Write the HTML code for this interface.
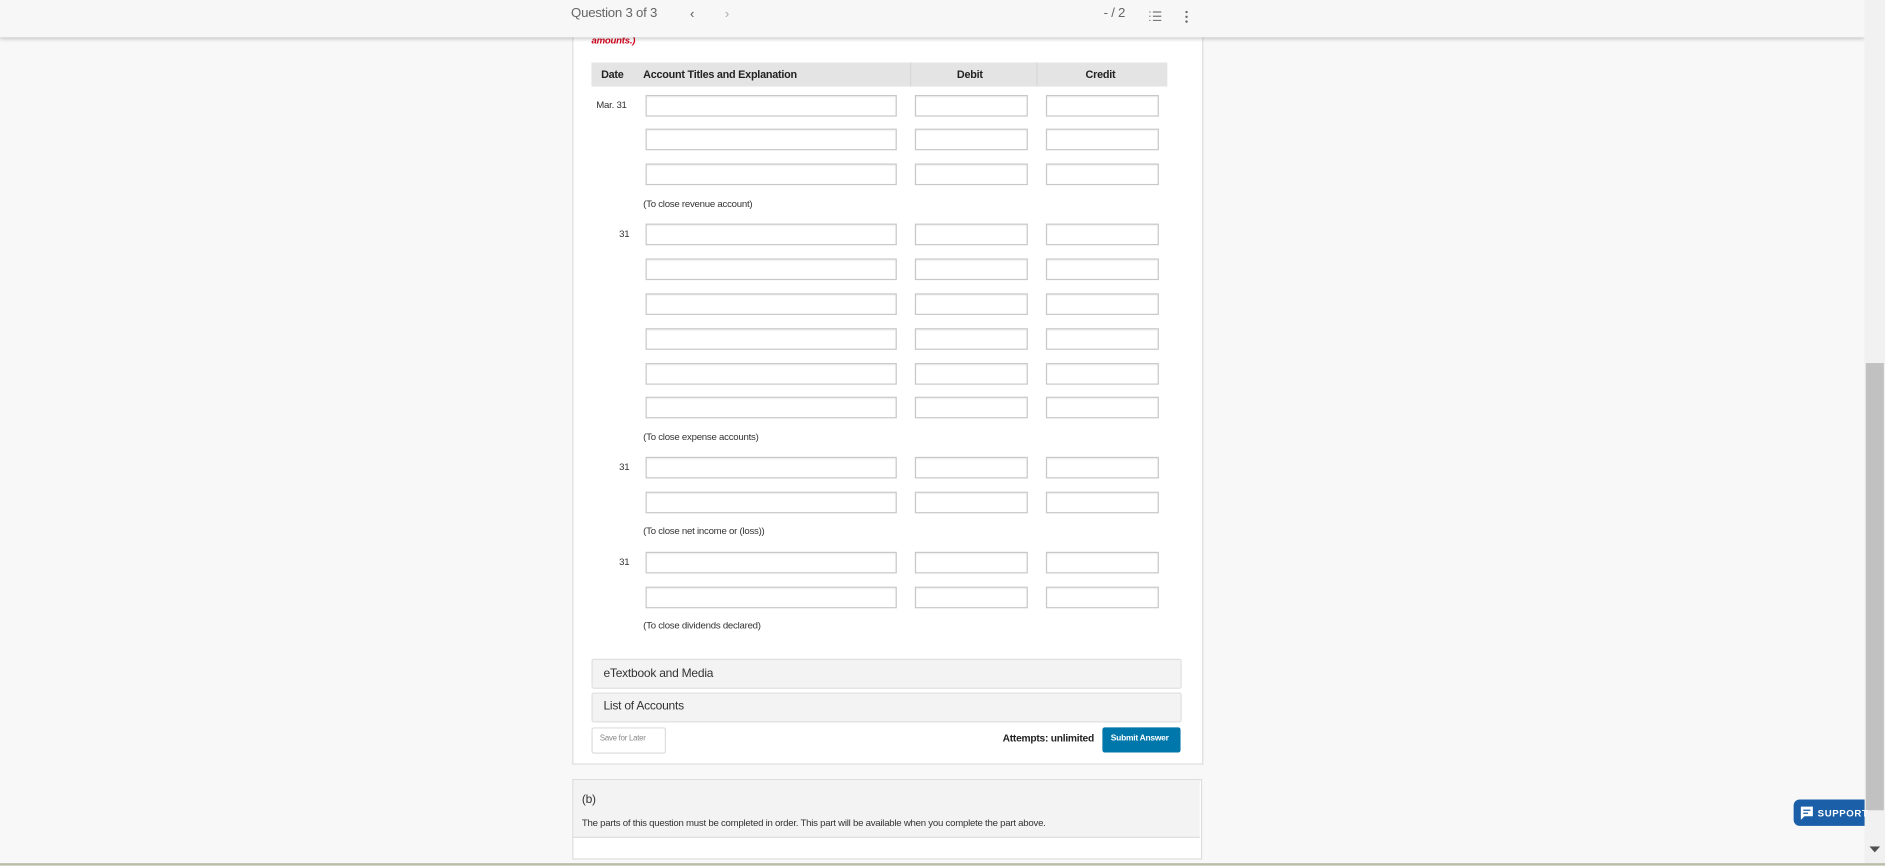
<!DOCTYPE html>
<html><head><meta charset="utf-8"><style>
html,body{margin:0;padding:0;width:1885px;height:866px;overflow:hidden;background:#f8f8f8;font-family:"Liberation Sans",sans-serif;}
#c{position:absolute;left:0;top:0;width:1568px;height:720px;transform:scale(1.20217);transform-origin:0 0;background:#f8f8f8;}
.a{position:absolute;}
.in{position:absolute;height:16px;border:1px solid #c8c8c8;background:#fff;box-sizing:content-box;box-shadow:inset 0 1px 1px rgba(0,0,0,.06);}
.t{position:absolute;font-size:8px;color:#333;white-space:nowrap;letter-spacing:-0.2px;}
</style></head><body><div id="c">
<div class="a" style="left:476px;top:20px;width:523px;height:615px;background:#fff;border:1px solid #ddd;border-top:none;"></div>
<div class="a t" style="left:492px;top:29px;color:#d0021b;font-style:italic;font-weight:bold;font-size:8px;">amounts.)</div>
<div class="a" style="left:492px;top:52px;width:479px;height:20px;background:#e4e4e4;"></div>
<div class="a" style="left:757px;top:52px;width:1px;height:20px;background:#d8d8d8;"></div>
<div class="a" style="left:862px;top:52px;width:1px;height:20px;background:#d8d8d8;"></div>
<div class="t" style="left:500px;top:57px;font-weight:bold;font-size:9px;color:#222;">Date</div>
<div class="t" style="left:535px;top:57px;font-weight:bold;font-size:9px;color:#222;">Account Titles and Explanation</div>
<div class="t" style="left:796px;top:57px;font-weight:bold;font-size:9px;color:#222;">Debit</div>
<div class="t" style="left:903px;top:57px;font-weight:bold;font-size:9px;color:#222;">Credit</div>
<div class="t" style="left:496px;top:83px;">Mar. 31</div>
<div class="t" style="left:515px;top:190px;">31</div>
<div class="t" style="left:515px;top:384px;">31</div>
<div class="t" style="left:515px;top:463px;">31</div>
<div class="t" style="left:535px;top:165px;">(To close revenue account)</div>
<div class="t" style="left:535px;top:359px;">(To close expense accounts)</div>
<div class="t" style="left:535px;top:437px;">(To close net income or (loss))</div>
<div class="t" style="left:535px;top:516px;">(To close dividends declared)</div>
<div id="rows"></div>
<script>
var ys=[79,107,136,186,215,244,273,302,330,380,409,459,488],h='';
ys.forEach(function(y){h+='<div class="in" style="left:537px;top:'+y+'px;width:207px"></div><div class="in" style="left:761px;top:'+y+'px;width:92px"></div><div class="in" style="left:870px;top:'+y+'px;width:92px"></div>';});
document.getElementById('rows').innerHTML=h;
</script>
<div class="a" style="left:492px;top:548px;width:489px;height:23px;background:#f3f3f3;border:1px solid #e0e0e0;border-radius:2px;"></div>
<div class="t" style="left:502px;top:555px;font-size:10px;">eTextbook and Media</div>
<div class="a" style="left:492px;top:576px;width:489px;height:23px;background:#f3f3f3;border:1px solid #e0e0e0;border-radius:2px;"></div>
<div class="t" style="left:502px;top:582px;font-size:10px;">List of Accounts</div>
<div class="a" style="left:492px;top:605px;width:60px;height:20px;background:#fff;border:1px solid #ddd;border-radius:2px;"></div>
<div class="t" style="left:499px;top:611px;font-size:6.5px;color:#888;">Save for Later</div>
<div class="t" style="left:834px;top:609px;font-size:8.5px;color:#222;font-weight:bold;">Attempts: unlimited</div>
<div class="a" style="left:917px;top:605px;width:65px;height:21px;background:#0077aa;border-radius:2px;"></div>
<div class="t" style="left:924px;top:611px;font-size:7px;color:#fff;font-weight:bold;">Submit Answer</div>
<div class="a" style="left:476px;top:648px;width:522px;height:65px;background:#fff;border:1px solid #ddd;"></div>
<div class="a" style="left:477px;top:649px;width:521px;height:47px;background:#f3f3f3;border-bottom:1px solid #ddd;"></div>
<div class="t" style="left:484px;top:660px;font-size:10px;">(b)</div>
<div class="t" style="left:484px;top:680px;font-size:8px;">The parts of this question must be completed in order. This part will be available when you complete the part above.</div>
<div class="a" style="left:0;top:0;width:1551px;height:31px;background:#f7f7f7;box-shadow:0 2px 3px rgba(0,0,0,.18);"></div>
<div class="t" style="left:475px;top:5px;font-size:11px;color:#666;">Question 3 of 3</div>
<div class="t" style="left:574px;top:6px;font-size:11px;color:#555;">&#8249;</div>
<div class="t" style="left:603px;top:6px;font-size:11px;color:#aaa;">&#8250;</div>
<div class="t" style="left:918px;top:5px;font-size:11px;color:#666;">- / 2</div>
<svg class="a" style="left:955px;top:8px" width="12" height="12"><g stroke="#777" stroke-width="1"><path d="M1 2h1M1 5.5h1M1 9h1M4 2h7M4 5.5h7M4 9h7"/></g></svg>
<svg class="a" style="left:985px;top:8px" width="4" height="12"><g fill="#666"><circle cx="2" cy="2" r="1"/><circle cx="2" cy="6" r="1"/><circle cx="2" cy="10" r="1"/></g></svg>
<div class="a" style="left:1551px;top:0;width:17px;height:720px;background:#f1f1f1;"></div>
<div class="a" style="left:1552px;top:302px;width:15px;height:372px;background:#c1c1c1;"></div>
<svg class="a" style="left:1555px;top:704px" width="9" height="6"><path d="M0 0h9L4.5 5z" fill="#505050"/></svg>
<div class="a" style="left:0;top:718px;width:1568px;height:2px;background:#b9bda8;"></div>
<div class="a" style="left:1492px;top:665px;width:59px;height:22px;background:#1a5fa8;border-radius:5px 0 0 5px;"></div>
<svg class="a" style="left:1497px;top:670px" width="12" height="12"><path d="M1 1h10v8H4l-3 3z" fill="#fff"/><path d="M3 4h6M3 6.5h4" stroke="#1a5fa8" stroke-width="1"/></svg>
<div class="t" style="left:1512px;top:672px;font-size:8px;color:#fff;font-weight:bold;letter-spacing:.5px;">SUPPORT</div>
</div></body></html>
